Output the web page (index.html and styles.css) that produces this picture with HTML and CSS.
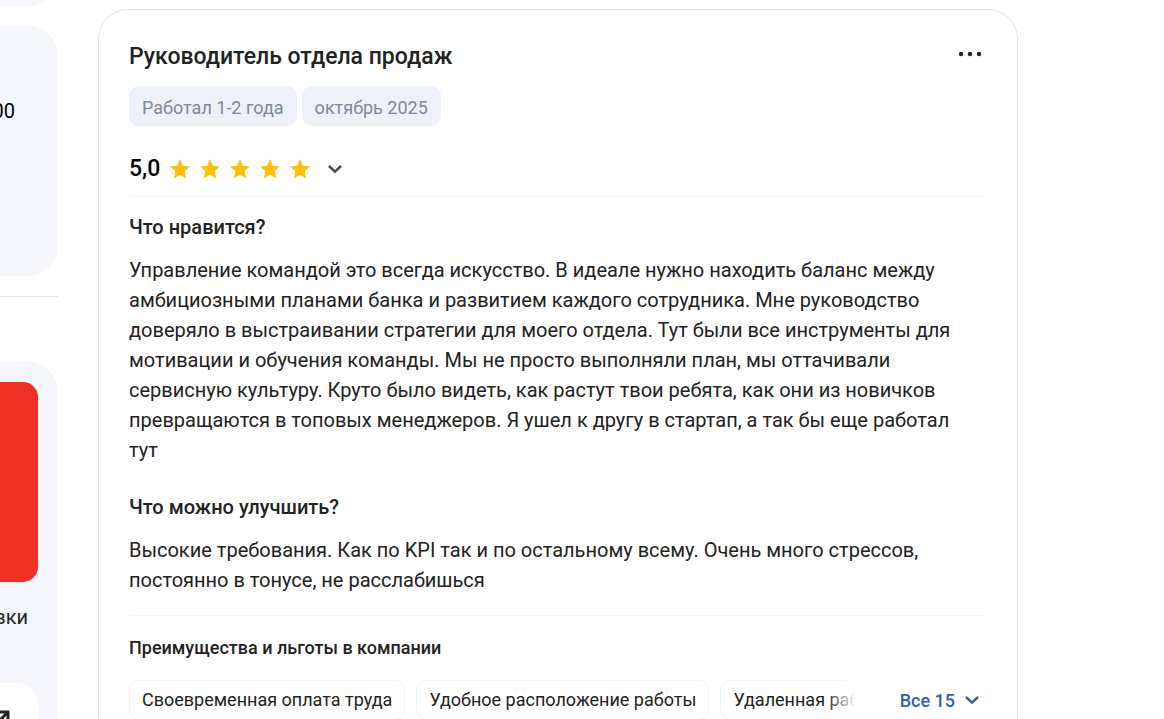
FILE: index.html
```html
<!DOCTYPE html>
<html lang="ru">
<head>
  <meta charset="UTF-8">
  <meta name="viewport" content="width=device-width, initial-scale=1.0">
  <title>Отзывы</title>
  <link rel="stylesheet" href="styles.css">
</head>
<body>

  <div class="page">
    <!-- Sidebar -->
    <aside class="sidebar">
      <div class="side-block side-block-end"></div>
      <div class="side-block side-hours">
        <p class="side-time">00</p>
      </div>
      <div class="side-promo">
        <div class="side-block promo-block">
          <div class="promo-banner"></div>
          <p class="promo-text">вки</p>
          <a href="#" class="promo-link" aria-label="Открыть">
            <svg width="16" height="16" viewBox="0 0 16 16" fill="none" stroke="#222" stroke-width="3">
              <path d="M2 2H14V14M14 2L2 14"/>
            </svg>
          </a>
        </div>
      </div>
    </aside>

    <!-- Review card -->
    <main class="review">
      <header class="review-header">
        <h1>Руководитель отдела продаж</h1>
        <button class="menu-button" aria-label="Меню">
          <svg width="24" height="6" viewBox="0 0 24 6" fill="#222">
            <circle cx="3" cy="3" r="2.2"/>
            <circle cx="12" cy="3" r="2.2"/>
            <circle cx="21" cy="3" r="2.2"/>
          </svg>
        </button>
      </header>

      <div class="tags">
        <span class="tag">Работал 1-2 года</span>
        <span class="tag">октябрь 2025</span>
      </div>

      <div class="rating">
        <span class="rating-value">5,0</span>
        <div class="stars">
          <svg class="star" viewBox="0 0 20 20"><path d="M10 0L12.9 6.8L20 7.5L14.6 12.3L16.2 19.6L10 15.8L3.8 19.6L5.4 12.3L0 7.5L7.1 6.8Z"/></svg>
          <svg class="star" viewBox="0 0 20 20"><path d="M10 0L12.9 6.8L20 7.5L14.6 12.3L16.2 19.6L10 15.8L3.8 19.6L5.4 12.3L0 7.5L7.1 6.8Z"/></svg>
          <svg class="star" viewBox="0 0 20 20"><path d="M10 0L12.9 6.8L20 7.5L14.6 12.3L16.2 19.6L10 15.8L3.8 19.6L5.4 12.3L0 7.5L7.1 6.8Z"/></svg>
          <svg class="star" viewBox="0 0 20 20"><path d="M10 0L12.9 6.8L20 7.5L14.6 12.3L16.2 19.6L10 15.8L3.8 19.6L5.4 12.3L0 7.5L7.1 6.8Z"/></svg>
          <svg class="star" viewBox="0 0 20 20"><path d="M10 0L12.9 6.8L20 7.5L14.6 12.3L16.2 19.6L10 15.8L3.8 19.6L5.4 12.3L0 7.5L7.1 6.8Z"/></svg>
        </div>
        <button class="rating-toggle" aria-label="Показать оценки">
          <svg width="14" height="10" viewBox="0 0 14 10" fill="none" stroke="#444" stroke-width="2.4">
            <path d="M1 2L7 7.6L13 2"/>
          </svg>
        </button>
      </div>

      <section class="review-body">
        <h2>Что нравится?</h2>
        <p>Управление командой это всегда искусство. В идеале нужно находить баланс между амбициозными планами банка и развитием каждого сотрудника. Мне руководство доверяло в выстраивании стратегии для моего отдела. Тут были все инструменты для мотивации и обучения команды. Мы не просто выполняли план, мы оттачивали сервисную культуру. Круто было видеть, как растут твои ребята, как они из новичков превращаются в топовых менеджеров. Я ушел к другу в стартап, а так бы еще работал тут</p>
        <h2>Что можно улучшить?</h2>
        <p>Высокие требования. Как по KPI так и по остальному всему. Очень много стрессов, постоянно в тонусе, не расслабишься</p>
      </section>

      <section class="benefits">
        <h3>Преимущества и льготы в компании</h3>
        <div class="benefits-row">
          <ul class="benefits-list">
            <li>Своевременная оплата труда</li>
            <li>Удобное расположение работы</li>
            <li>Удаленная работа</li>
          </ul>
          <button class="all-button">
            Все 15
            <svg width="14" height="10" viewBox="0 0 14 10" fill="none" stroke="#315fa8" stroke-width="2.4">
              <path d="M1 2L7 7.6L13 2"/>
            </svg>
          </button>
        </div>
      </section>
    </main>
  </div>

</body>
</html>
```

FILE: styles.css
```css
* {
  margin: 0;
  padding: 0;
  box-sizing: border-box;
}

body {
  font-family: Roboto, "Liberation Sans", sans-serif;
  font-size: 20px;
  line-height: 30px;
  color: #222;
  background-color: #fff;
  height: 100vh;
  overflow: hidden;
}

button {
  background: none;
  border: none;
  font-family: inherit;
  cursor: pointer;
}

svg {
  display: block;
}

.page {
  display: flex;
  align-items: flex-start;
  gap: 40px;
  padding-right: 146px;
}

/* Sidebar */
.sidebar {
  width: 58px;
  flex-shrink: 0;
  overflow: hidden;
}

.side-block {
  background-color: #f4f6fc;
  border-radius: 0 30px 30px 0;
}

.side-block-end {
  height: 60px;
  margin-top: -54px;
}

.side-hours {
  height: 250px;
  margin: 20px 0;
  padding-top: 70px;
}

.side-time {
  width: 15px;
  display: flex;
  justify-content: flex-end;
  color: #000;
}

.side-promo {
  border-top: 1px solid #dae2ec;
  padding-top: 65px;
}

.promo-block {
  height: 500px;
  padding: 20px 20px 20px 0;
}

.promo-banner {
  height: 200px;
  background-color: #ef3124;
  border-radius: 0 15px 15px 0;
}

.promo-text {
  width: 28px;
  margin-top: 20px;
  display: flex;
  justify-content: flex-end;
}

.promo-link {
  display: flex;
  justify-content: flex-end;
  height: 80px;
  margin-top: 51px;
  padding: 27px 28px 0 0;
  background-color: #fff;
  border-radius: 0 20px 20px 0;
}

.promo-link svg {
  flex-shrink: 0;
}

/* Review card */
.review {
  flex: 1;
  min-width: 0;
  margin-top: 9px;
  padding: 30px;
  border: 1px solid #dfe3ed;
  border-radius: 30px;
}

.review-header {
  display: flex;
  justify-content: space-between;
  align-items: flex-start;
}

h1 {
  font-size: 23px;
  font-weight: 500;
  line-height: 34px;
}

.menu-button {
  padding: 11px 5px;
}

.tags {
  display: flex;
  gap: 5px;
  margin-top: 12px;
}

.tag {
  padding: 7px 13px 3px;
  background-color: #eef1f9;
  border-radius: 10px;
  font-size: 18px;
  color: #7c889b;
}

.rating {
  display: flex;
  align-items: center;
  margin-top: 28px;
  padding-bottom: 12px;
  border-bottom: 1px solid #f4f6fc;
}

.rating-value {
  font-size: 23px;
  font-weight: 500;
  color: #000;
}

.stars {
  display: flex;
  gap: 10px;
  margin-left: 10px;
}

.star {
  width: 20px;
  height: 20px;
  fill: #ffc107;
}

.rating-toggle {
  margin-left: 18px;
}

.review-body {
  padding: 15px 0 20px;
  border-bottom: 1px solid #f4f6fc;
}

.review-body p {
  padding-right: 20px;
}

h2 {
  font-size: 20px;
  font-weight: 500;
  margin-bottom: 13px;
}

.review-body p + h2 {
  margin-top: 27px;
}

/* Benefits */
.benefits {
  padding-top: 17px;
}

h3 {
  font-size: 18px;
  font-weight: 500;
}

.benefits-row {
  display: flex;
  align-items: center;
  justify-content: space-between;
  margin-top: 17px;
}

.benefits-list {
  position: relative;
  display: flex;
  gap: 11px;
  width: 727px;
  overflow: hidden;
  list-style: none;
}

/* Fade the cut off item */
.benefits-list::after {
  content: "";
  position: absolute;
  top: 0;
  right: 0;
  width: 30px;
  height: 100%;
  background: linear-gradient(to right, rgba(255, 255, 255, 0), #fff);
}

.benefits-list li {
  flex-shrink: 0;
  padding: 4px 12px;
  border: 1px solid #eef0fa;
  border-radius: 10px;
  font-size: 18px;
  white-space: nowrap;
}

.all-button {
  display: flex;
  align-items: center;
  gap: 10px;
  padding-right: 8px;
  font-size: 18px;
  font-weight: 500;
  color: #315fa8;
}
```
